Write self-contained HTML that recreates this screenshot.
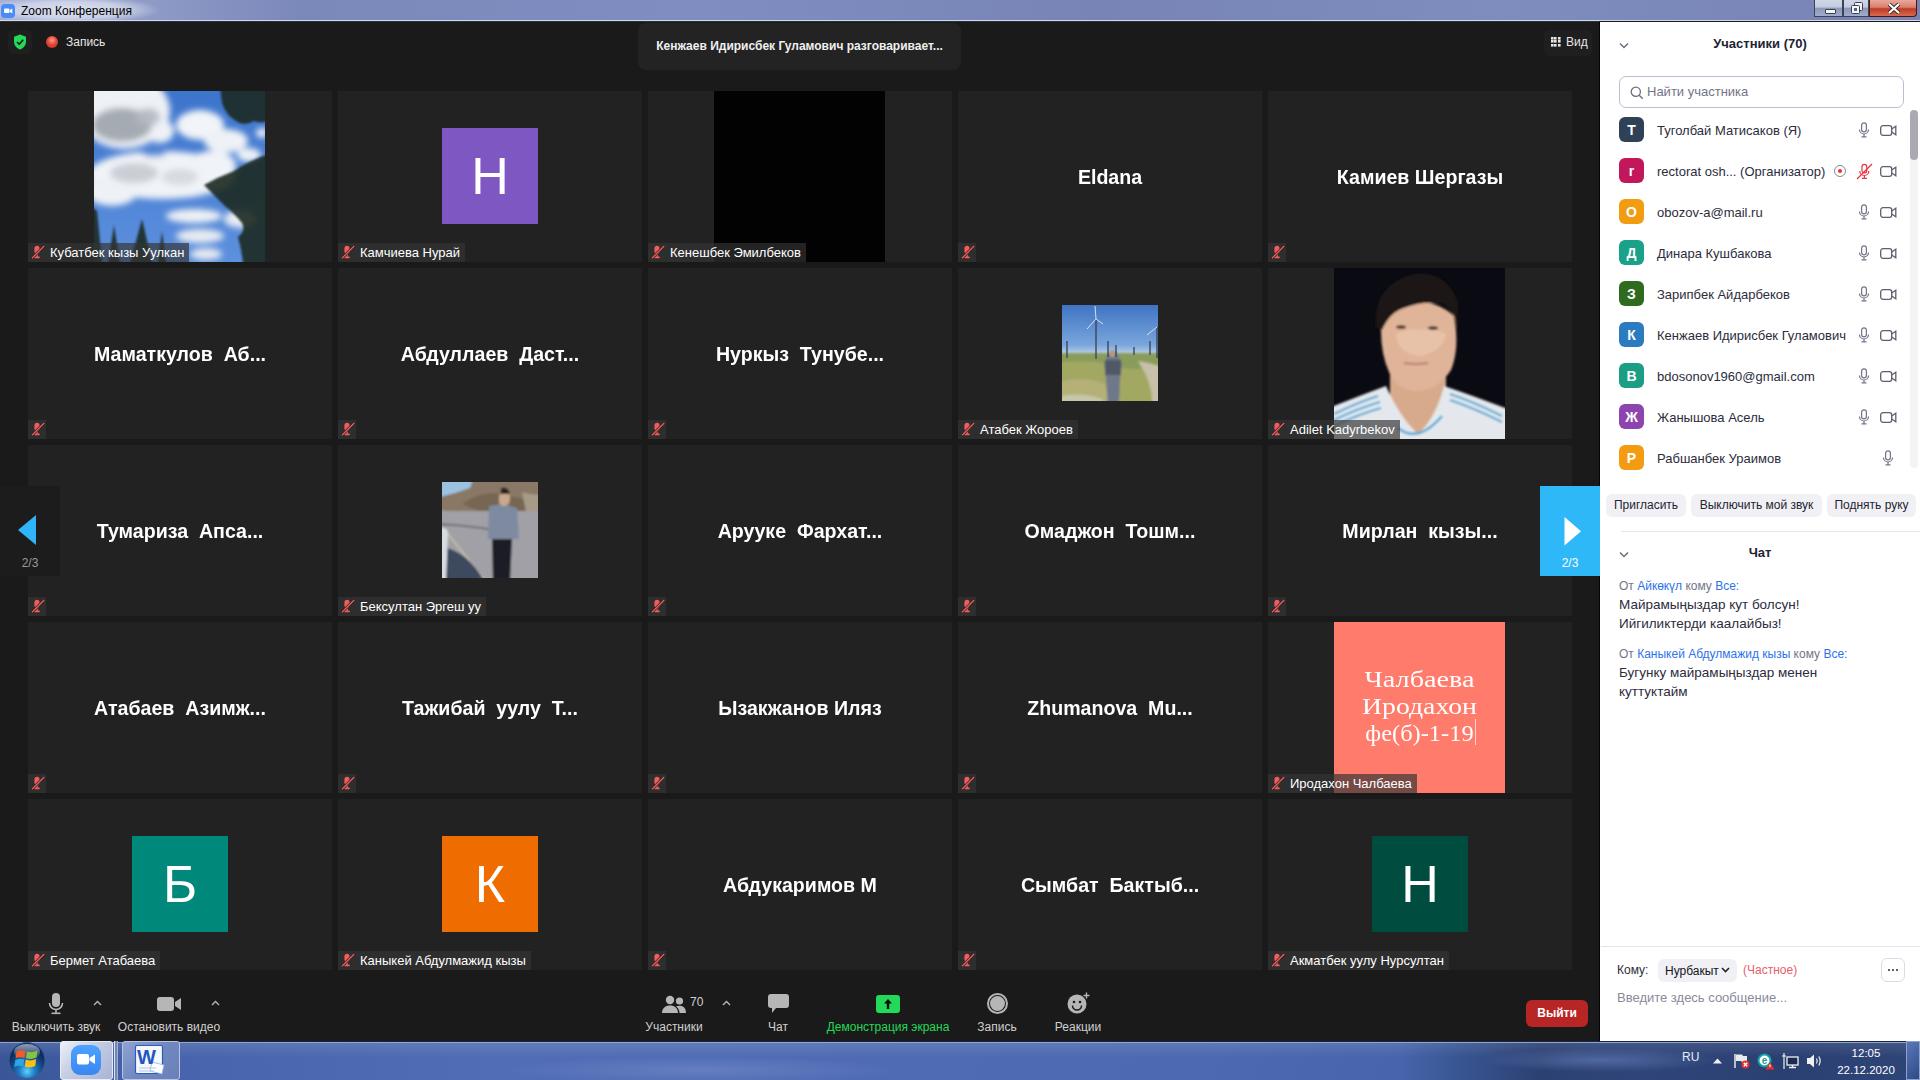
<!DOCTYPE html>
<html><head><meta charset="utf-8">
<style>
*{margin:0;padding:0;box-sizing:border-box}
html,body{width:1920px;height:1080px;overflow:hidden;background:#1a1a1a;font-family:"Liberation Sans",sans-serif}
.abs{position:absolute}
#title{left:0;top:0;width:1920px;height:21px;background:radial-gradient(ellipse 90px 14px at 70px 10px,rgba(225,228,242,.95) 0,rgba(210,215,235,.85) 60%,rgba(190,198,225,0) 100%),linear-gradient(90deg,#a6b0d2 0,#8d99c6 160px,#7b88ba 300px,#7f8dc0 700px,#7884b6 1100px,#7e8cbe 1500px,#7783b4 100%);border-bottom:1px solid #d0d8ea}
#title .t{left:21px;top:4px;font-size:12px;color:#000}
#title .zi{left:1px;top:4px}
.wb{position:absolute;top:0;height:17px;border:1px solid #3b4356;border-top:none;background:linear-gradient(180deg,#d0d6e6 0,#c3cbe0 45%,#8b97b8 50%,#a0acc8 100%)}
.wc{background:linear-gradient(180deg,#e8a89c 0,#d9806f 45%,#bf3b25 55%,#d66a50 100%);border-color:#4a1810;border-radius:0 0 4px 0}
#main{left:0;top:21px;width:1599px;height:1020px;background:#1a1a1a;border-top:1px solid #2a2f3d}
#panel{left:1600px;top:22px;width:320px;height:1019px;background:#fff}
#divider{left:1599px;top:22px;width:1px;height:1019px;background:#060606}
.tile{position:absolute;width:304px;height:171px;background:#222;overflow:hidden}
.ph{position:absolute}
.nm{position:absolute;left:0;top:1px;width:304px;height:171px;display:flex;align-items:center;justify-content:center;color:#fff;font-weight:bold;font-size:19.6px;white-space:pre;transform:scaleY(1.06)}
.lbl{position:absolute;left:0;bottom:0;height:19px;background:rgba(52,52,52,.68);color:#fff;font-size:13px;line-height:19px;padding-left:22px;padding-right:5px;white-space:nowrap}
.lbl.ic{width:18px;padding:0}
.lbl svg{position:absolute;left:3px;top:2px}
.av{position:absolute;width:96px;height:96px;left:104px;top:37px;color:#fff;font-size:52px;display:flex;align-items:center;justify-content:center}
#taskbar{left:0;top:1041px;width:1920px;height:39px;background:linear-gradient(180deg,rgba(255,255,255,.10) 0,rgba(255,255,255,0) 40%),radial-gradient(ellipse 120px 12px at 1600px 18px,rgba(120,150,210,.45),rgba(120,150,210,0)),radial-gradient(ellipse 200px 14px at 700px 28px,rgba(140,160,215,.35),rgba(140,160,215,0)),linear-gradient(90deg,#3a5699 0,#4864ac 180px,#516db5 500px,#4f6bb3 900px,#4d69b1 1200px,#4864ab 1400px,#3a5796 1450px,#2c4172 1540px,#2f457a 1640px,#2b4072 1780px,#2e4577 100%);border-top:1px solid #1a2440;box-shadow:inset 0 1px 0 #90a4d0}
.pt{position:absolute;left:1619px;width:290px;height:26px}
.pt .a{position:absolute;left:0;top:0;width:25px;height:25px;border-radius:6px;color:#fff;font-size:14px;font-weight:bold;display:flex;align-items:center;justify-content:center}
.pt .n{position:absolute;left:38px;top:6px;font-size:13px;color:#2c2c3c;white-space:nowrap}
.tb{position:absolute;color:#d0d0d0;font-size:12px;white-space:nowrap;text-align:center}
.chat{left:1619px;white-space:nowrap}
.sl{position:absolute;left:0;width:171px;text-align:center;font-family:'Liberation Serif',serif;font-size:23.5px;line-height:27px;color:#fff;white-space:nowrap}

</style></head><body>
<div id="title" class="abs"><div class="zi abs"><svg width="14" height="14" viewBox="0 0 14 14"><rect x="0" y="0" width="14" height="14" rx="4" fill="#4a8cf7"/><rect x="3" y="4.5" width="5.5" height="4.5" rx="1" fill="#fff"/><path d="M9 6l2.3-1.5v5L9 8z" fill="#fff"/></svg></div><div class="t abs">Zoom Конференция</div><div class="wb abs" style="left:1814px;width:29px"><div style="position:absolute;left:10px;top:9px;width:11px;height:5px;background:#f4f4f4;border:1px solid #3a4050;border-radius:1px"></div></div><div class="wb abs" style="left:1843px;width:26px"><svg style="position:absolute;left:6px;top:1px" width="14" height="14" viewBox="0 0 14 14"><rect x="4.5" y="1.5" width="8" height="8" rx="1" fill="#eef0f4" stroke="#3a4050" stroke-width="1"/><rect x="1.5" y="4.5" width="8" height="8" rx="1" fill="#f4f5f8" stroke="#3a4050" stroke-width="1"/><rect x="4" y="7" width="3" height="3" fill="#5a6478"/></svg></div><div class="wb wc abs" style="left:1869px;width:48px"><svg style="position:absolute;left:17px;top:3px" width="14" height="11" viewBox="0 0 14 11"><path d="M2 1L12 10M12 1L2 10" stroke="#3a2a2a" stroke-width="4"/><path d="M2 1L12 10M12 1L2 10" stroke="#fff" stroke-width="2.2"/></svg></div></div>
<div id="main" class="abs"></div>
<div class="abs" style="left:8px;top:30px;width:24px;height:24px;border-radius:5px;background:#1f1f1f"></div>
<svg class="abs" style="left:13px;top:34px" width="14" height="16" viewBox="0 0 14 16"><path d="M7 0.5L13 2.8V7.5C13 11.5 10.3 14.2 7 15.5C3.7 14.2 1 11.5 1 7.5V2.8z" fill="#23d959"/><path d="M4 8l2.2 2.2L10.2 5.8" stroke="#111" stroke-width="1.6" fill="none"/></svg>
<div class="abs" style="left:46px;top:36px;width:12px;height:12px;border-radius:50%;background:radial-gradient(circle at 50% 35%,#ff9a8a 0,#e6463a 45%,#b82a22 100%)"></div>
<div class="abs" style="left:66px;top:35px;font-size:12px;color:#e6e6e6">Запись</div>
<div class="abs" style="left:638px;top:23px;width:323px;height:47px;background:#232323;border-radius:8px"></div>
<div class="abs" style="left:638px;top:39px;width:323px;text-align:center;font-size:12px;font-weight:bold;color:#f0f0f0">Кенжаев Идирисбек Гуламович разговаривает...</div>
<div class="abs" style="left:1544px;top:30px;width:48px;height:26px;border-radius:6px;background:#1f1f1f"></div>
<svg class="abs" style="left:1551px;top:37px" width="10" height="10" viewBox="0 0 10 10"><rect x="0" y="0" width="2.6" height="2.6" fill="#e6e6e6"/><rect x="0" y="3" width="2.6" height="2.6" fill="#e6e6e6"/><rect x="0" y="7" width="2.6" height="2.6" fill="#e6e6e6"/><rect x="3" y="0" width="2.6" height="2.6" fill="#e6e6e6"/><rect x="3" y="3" width="2.6" height="2.6" fill="#e6e6e6"/><rect x="3" y="7" width="2.6" height="2.6" fill="#e6e6e6"/><rect x="7" y="0" width="2.6" height="2.6" fill="#e6e6e6"/><rect x="7" y="3" width="2.6" height="2.6" fill="#e6e6e6"/><rect x="7" y="7" width="2.6" height="2.6" fill="#e6e6e6"/></svg>
<div class="abs" style="left:1566px;top:35px;font-size:12px;color:#e6e6e6">Вид</div>
<div class="tile" style="left:28px;top:91px"><svg class="ph" style="left:66px;top:0" width="171" height="171" viewBox="0 0 171 171"><defs><linearGradient id="sk" x1="0" y1="0" x2="0" y2="1"><stop offset="0" stop-color="#3d74cc"/><stop offset="1" stop-color="#5d90de"/></linearGradient><filter id="bl" x="-10%" y="-10%" width="120%" height="120%"><feGaussianBlur stdDeviation="3.2"/></filter><filter id="bl2" x="-10%" y="-10%" width="120%" height="120%"><feGaussianBlur stdDeviation="0.9"/></filter></defs><rect width="171" height="171" fill="url(#sk)"/><g filter="url(#bl)"><ellipse cx="30.0" cy="20.0" rx="46.0" ry="38.0" fill="#eef1f6" opacity="1.00"/><ellipse cx="66.0" cy="40.0" rx="14.0" ry="12.0" fill="#eef1f6" opacity="1.00"/><ellipse cx="28.0" cy="34.0" rx="30.0" ry="17.0" fill="#a0a6af" opacity="0.95"/><ellipse cx="54.0" cy="26.0" rx="12.0" ry="9.0" fill="#b4b9c1" opacity="0.90"/><ellipse cx="106.0" cy="34.0" rx="24.0" ry="15.0" fill="#f1f4f8" opacity="1.00"/><ellipse cx="132.0" cy="50.0" rx="22.0" ry="12.0" fill="#eef2f6" opacity="1.00"/><ellipse cx="155.0" cy="64.0" rx="12.0" ry="7.0" fill="#eef2f6" opacity="1.00"/><ellipse cx="168.0" cy="42.0" rx="6.0" ry="5.0" fill="#eef2f6" opacity="1.00"/><ellipse cx="68.0" cy="84.0" rx="74.0" ry="24.0" fill="#f0f3f7" opacity="1.00"/><ellipse cx="18.0" cy="100.0" rx="26.0" ry="15.0" fill="#eef1f5" opacity="1.00"/><ellipse cx="118.0" cy="74.0" rx="24.0" ry="14.0" fill="#f0f3f7" opacity="1.00"/><ellipse cx="40.0" cy="82.0" rx="24.0" ry="10.0" fill="#c3c8d0" opacity="0.85"/><ellipse cx="86.0" cy="86.0" rx="18.0" ry="8.0" fill="#d0d5dc" opacity="0.80"/><ellipse cx="60.0" cy="62.0" rx="12.0" ry="4.0" fill="#4a80d4" opacity="0.85"/><ellipse cx="100.0" cy="125.0" rx="28.0" ry="7.0" fill="#eef1f6" opacity="1.00"/><ellipse cx="106.0" cy="145.0" rx="24.0" ry="7.0" fill="#e8ecf2" opacity="1.00"/><ellipse cx="112.0" cy="163.0" rx="16.0" ry="6.0" fill="#e6eaf0" opacity="1.00"/><ellipse cx="146.0" cy="128.0" rx="16.0" ry="9.0" fill="#e8ecf2" opacity="1.00"/></g><g filter="url(#bl2)" fill="#1c2c22" opacity="0.9"><path d="M126 -5H180V26Q170 34 160 30Q150 36 142 30Q132 24 128 12z"/><path d="M110 94Q124 86 140 80Q152 72 162 68Q170 64 180 62V180H150Q148 160 144 146Q152 140 148 132Q140 122 132 116Q122 106 110 94z"/><path d="M-5 114L3 120L9 180H-5z M13 180L20 134L27 180z M34 180L48 128L60 180z M63 180L68 140L73 180z"/></g></svg><div class="lbl"><svg width="14" height="14" viewBox="0 0 14 14"><path d="M6 0.8C7.7 0.8 8.6 2 8.6 3.6V6.2C8.6 7.8 7.7 9 6 9C4.3 9 3.4 7.8 3.4 6.2V3.6C3.4 2 4.3 0.8 6 0.8z" fill="#f25c5c"/><path d="M5.2 9V12H6.8V9z" fill="#f25c5c"/><rect x="3.2" y="11.6" width="5.6" height="1.6" rx="0.8" fill="#f25c5c"/><path d="M1 13.2L13.2 1" stroke="#202020" stroke-width="2.6"/><path d="M1 13.2L13.2 1" stroke="#f25c5c" stroke-width="1.3"/></svg>Кубатбек кызы Уулкан</div></div>
<div class="tile" style="left:338px;top:91px"><div class="av" style="background:#7f57c2">Н</div><div class="lbl"><svg width="14" height="14" viewBox="0 0 14 14"><path d="M6 0.8C7.7 0.8 8.6 2 8.6 3.6V6.2C8.6 7.8 7.7 9 6 9C4.3 9 3.4 7.8 3.4 6.2V3.6C3.4 2 4.3 0.8 6 0.8z" fill="#f25c5c"/><path d="M5.2 9V12H6.8V9z" fill="#f25c5c"/><rect x="3.2" y="11.6" width="5.6" height="1.6" rx="0.8" fill="#f25c5c"/><path d="M1 13.2L13.2 1" stroke="#202020" stroke-width="2.6"/><path d="M1 13.2L13.2 1" stroke="#f25c5c" stroke-width="1.3"/></svg>Камчиева Нурай</div></div>
<div class="tile" style="left:648px;top:91px"><div class="ph" style="left:66px;top:0;width:171px;height:171px;background:#020202"></div><div class="lbl"><svg width="14" height="14" viewBox="0 0 14 14"><path d="M6 0.8C7.7 0.8 8.6 2 8.6 3.6V6.2C8.6 7.8 7.7 9 6 9C4.3 9 3.4 7.8 3.4 6.2V3.6C3.4 2 4.3 0.8 6 0.8z" fill="#f25c5c"/><path d="M5.2 9V12H6.8V9z" fill="#f25c5c"/><rect x="3.2" y="11.6" width="5.6" height="1.6" rx="0.8" fill="#f25c5c"/><path d="M1 13.2L13.2 1" stroke="#202020" stroke-width="2.6"/><path d="M1 13.2L13.2 1" stroke="#f25c5c" stroke-width="1.3"/></svg>Кенешбек Эмилбеков</div></div>
<div class="tile" style="left:958px;top:91px"><div class="nm">Eldana</div><div class="lbl ic"><svg width="14" height="14" viewBox="0 0 14 14"><path d="M6 0.8C7.7 0.8 8.6 2 8.6 3.6V6.2C8.6 7.8 7.7 9 6 9C4.3 9 3.4 7.8 3.4 6.2V3.6C3.4 2 4.3 0.8 6 0.8z" fill="#f25c5c"/><path d="M5.2 9V12H6.8V9z" fill="#f25c5c"/><rect x="3.2" y="11.6" width="5.6" height="1.6" rx="0.8" fill="#f25c5c"/><path d="M1 13.2L13.2 1" stroke="#202020" stroke-width="2.6"/><path d="M1 13.2L13.2 1" stroke="#f25c5c" stroke-width="1.3"/></svg></div></div>
<div class="tile" style="left:1268px;top:91px"><div class="nm">Камиев Шергазы</div><div class="lbl ic"><svg width="14" height="14" viewBox="0 0 14 14"><path d="M6 0.8C7.7 0.8 8.6 2 8.6 3.6V6.2C8.6 7.8 7.7 9 6 9C4.3 9 3.4 7.8 3.4 6.2V3.6C3.4 2 4.3 0.8 6 0.8z" fill="#f25c5c"/><path d="M5.2 9V12H6.8V9z" fill="#f25c5c"/><rect x="3.2" y="11.6" width="5.6" height="1.6" rx="0.8" fill="#f25c5c"/><path d="M1 13.2L13.2 1" stroke="#202020" stroke-width="2.6"/><path d="M1 13.2L13.2 1" stroke="#f25c5c" stroke-width="1.3"/></svg></div></div>
<div class="tile" style="left:28px;top:268px"><div class="nm">Маматкулов  Аб...</div><div class="lbl ic"><svg width="14" height="14" viewBox="0 0 14 14"><path d="M6 0.8C7.7 0.8 8.6 2 8.6 3.6V6.2C8.6 7.8 7.7 9 6 9C4.3 9 3.4 7.8 3.4 6.2V3.6C3.4 2 4.3 0.8 6 0.8z" fill="#f25c5c"/><path d="M5.2 9V12H6.8V9z" fill="#f25c5c"/><rect x="3.2" y="11.6" width="5.6" height="1.6" rx="0.8" fill="#f25c5c"/><path d="M1 13.2L13.2 1" stroke="#202020" stroke-width="2.6"/><path d="M1 13.2L13.2 1" stroke="#f25c5c" stroke-width="1.3"/></svg></div></div>
<div class="tile" style="left:338px;top:268px"><div class="nm">Абдуллаев  Даст...</div><div class="lbl ic"><svg width="14" height="14" viewBox="0 0 14 14"><path d="M6 0.8C7.7 0.8 8.6 2 8.6 3.6V6.2C8.6 7.8 7.7 9 6 9C4.3 9 3.4 7.8 3.4 6.2V3.6C3.4 2 4.3 0.8 6 0.8z" fill="#f25c5c"/><path d="M5.2 9V12H6.8V9z" fill="#f25c5c"/><rect x="3.2" y="11.6" width="5.6" height="1.6" rx="0.8" fill="#f25c5c"/><path d="M1 13.2L13.2 1" stroke="#202020" stroke-width="2.6"/><path d="M1 13.2L13.2 1" stroke="#f25c5c" stroke-width="1.3"/></svg></div></div>
<div class="tile" style="left:648px;top:268px"><div class="nm">Нуркыз  Тунубе...</div><div class="lbl ic"><svg width="14" height="14" viewBox="0 0 14 14"><path d="M6 0.8C7.7 0.8 8.6 2 8.6 3.6V6.2C8.6 7.8 7.7 9 6 9C4.3 9 3.4 7.8 3.4 6.2V3.6C3.4 2 4.3 0.8 6 0.8z" fill="#f25c5c"/><path d="M5.2 9V12H6.8V9z" fill="#f25c5c"/><rect x="3.2" y="11.6" width="5.6" height="1.6" rx="0.8" fill="#f25c5c"/><path d="M1 13.2L13.2 1" stroke="#202020" stroke-width="2.6"/><path d="M1 13.2L13.2 1" stroke="#f25c5c" stroke-width="1.3"/></svg></div></div>
<div class="tile" style="left:958px;top:268px"><svg class="ph" style="left:104px;top:37px" width="96" height="96" viewBox="0 0 96 96"><defs><linearGradient id="ws" x1="0" y1="0" x2="0" y2="1"><stop offset="0" stop-color="#3f74c4"/><stop offset="0.8" stop-color="#7aa6dc"/><stop offset="1" stop-color="#c4d6ea"/></linearGradient><filter id="wb" x="-10%" y="-10%" width="120%" height="120%"><feGaussianBlur stdDeviation="1.1"/></filter></defs><rect width="96" height="96" fill="#98a468"/><rect width="96" height="50" fill="url(#ws)"/><g filter="url(#wb)"><rect x="-6" y="48" width="108" height="54" fill="#8a9c5c"/><path d="M-6 58Q30 54 50 60Q70 68 102 60V102H-6z" fill="#a2a862"/><path d="M-6 78Q20 70 40 78Q55 84 62 102H-6z" fill="#b4b078"/><path d="M-6 92Q20 86 40 94L44 102H-6z" fill="#c6c6a8"/><path d="M76 56Q88 58 102 62V102H90Q92 80 76 56z" fill="#c8c0a8"/><path d="M48 46Q54 44 56 50L60 58L58 74L57 102H46L44 74L42 58z" fill="#6e7888"/><path d="M43 55H59V70H43z" fill="#505866"/><circle cx="50.5" cy="49" r="3" fill="#c09880"/></g><g stroke="#384050" stroke-width="1.3"><path d="M34 14V54M5 36V53M95 22V53M88 36V50M46 36V52M54 40V52M72 42V50"/></g><g stroke="#e4e9f0" stroke-width="0.9"><path d="M34 14L25 24M34 14L41 19M34 14L33 1M95 22L85 30"/></g></svg><div class="lbl"><svg width="14" height="14" viewBox="0 0 14 14"><path d="M6 0.8C7.7 0.8 8.6 2 8.6 3.6V6.2C8.6 7.8 7.7 9 6 9C4.3 9 3.4 7.8 3.4 6.2V3.6C3.4 2 4.3 0.8 6 0.8z" fill="#f25c5c"/><path d="M5.2 9V12H6.8V9z" fill="#f25c5c"/><rect x="3.2" y="11.6" width="5.6" height="1.6" rx="0.8" fill="#f25c5c"/><path d="M1 13.2L13.2 1" stroke="#202020" stroke-width="2.6"/><path d="M1 13.2L13.2 1" stroke="#f25c5c" stroke-width="1.3"/></svg>Атабек Жороев</div></div>
<div class="tile" style="left:1268px;top:268px"><svg class="ph" style="left:66px;top:0" width="171" height="171" viewBox="0 0 171 171"><defs><filter id="fb" x="-10%" y="-10%" width="120%" height="120%"><feGaussianBlur stdDeviation="1.2"/></filter></defs><rect width="171" height="171" fill="#0a0b12"/><g filter="url(#fb)"><path d="M56 104Q84 124 112 104V171H56z" fill="#d8aa8c"/><path d="M47 62Q46 36 70 34Q100 30 120 48Q126 80 117 102Q104 122 83 123Q62 122 55 104Q47 86 47 62z" fill="#e0b498"/><path d="M42 60Q38 16 80 6Q112 2 124 34L124 62Q122 44 110 36Q90 32 70 40Q56 44 48 62z" fill="#1c1512"/><path d="M62 66Q75 60 86 62Q100 60 112 66Q108 84 86 88Q64 86 62 66z" fill="#e8c2a8"/><path d="M-5 140Q25 128 52 118Q66 150 84 166Q102 150 110 118Q140 128 176 142V176H-5z" fill="#e4e8ec"/><path d="M0 146Q25 134 44 128M0 152Q25 140 46 134M0 158Q25 146 47 140M116 126Q140 134 168 148M116 132Q140 140 168 154" stroke="#4aa6d6" stroke-width="2" fill="none"/><path d="M64 160Q84 176 108 148" stroke="#4aa6d6" stroke-width="2.4" fill="none"/><ellipse cx="67" cy="59" rx="5" ry="1.8" fill="#4a3026"/><ellipse cx="99" cy="60" rx="5" ry="1.8" fill="#4a3026"/><path d="M70 95Q82 97 94 95" stroke="#b88068" stroke-width="2" fill="none"/></g></svg><div class="lbl"><svg width="14" height="14" viewBox="0 0 14 14"><path d="M6 0.8C7.7 0.8 8.6 2 8.6 3.6V6.2C8.6 7.8 7.7 9 6 9C4.3 9 3.4 7.8 3.4 6.2V3.6C3.4 2 4.3 0.8 6 0.8z" fill="#f25c5c"/><path d="M5.2 9V12H6.8V9z" fill="#f25c5c"/><rect x="3.2" y="11.6" width="5.6" height="1.6" rx="0.8" fill="#f25c5c"/><path d="M1 13.2L13.2 1" stroke="#202020" stroke-width="2.6"/><path d="M1 13.2L13.2 1" stroke="#f25c5c" stroke-width="1.3"/></svg>Adilet Kadyrbekov</div></div>
<div class="tile" style="left:28px;top:445px"><div class="nm">Тумариза  Апса...</div><div class="lbl ic"><svg width="14" height="14" viewBox="0 0 14 14"><path d="M6 0.8C7.7 0.8 8.6 2 8.6 3.6V6.2C8.6 7.8 7.7 9 6 9C4.3 9 3.4 7.8 3.4 6.2V3.6C3.4 2 4.3 0.8 6 0.8z" fill="#f25c5c"/><path d="M5.2 9V12H6.8V9z" fill="#f25c5c"/><rect x="3.2" y="11.6" width="5.6" height="1.6" rx="0.8" fill="#f25c5c"/><path d="M1 13.2L13.2 1" stroke="#202020" stroke-width="2.6"/><path d="M1 13.2L13.2 1" stroke="#f25c5c" stroke-width="1.3"/></svg></div></div>
<div class="tile" style="left:338px;top:445px"><svg class="ph" style="left:104px;top:37px" width="96" height="96" viewBox="0 0 96 96"><defs><filter id="rb" x="-10%" y="-10%" width="120%" height="120%"><feGaussianBlur stdDeviation="1.1"/></filter></defs><rect width="96" height="96" fill="#a0a0a6"/><g filter="url(#rb)"><rect x="-6" y="-6" width="108" height="40" fill="#9cc2e2"/><path d="M-6 16Q12 12 28 6Q30 -2 34 -6H102V36Q70 32 40 30Q10 30 -6 28z" fill="#8a7866"/><path d="M20 22Q40 8 62 12Q80 18 102 20V38Q70 32 40 30z" fill="#766652"/><path d="M80 10Q92 14 102 12V34L84 30z" fill="#a89a88"/><rect x="-6" y="29" width="108" height="73" fill="#a0a0a6"/><path d="M-6 42Q30 44 50 48" stroke="#72727a" stroke-width="2" fill="none"/><path d="M6 52L46 102" stroke="#cac2aa" stroke-width="1.5" fill="none"/><path d="M-6 64Q25 66 44 102H-6z" fill="#3e4a5e"/><path d="M-6 45Q6 45 6 50L4 102H-6z" fill="#d8dce2"/><path d="M47 24Q60 20 75 26L77 57H46z" fill="#7e8aa0"/><path d="M58 8Q68 6 68 16Q68 24 62 24Q56 24 57 16z" fill="#c8a88e"/><path d="M59 6Q66 4 68 12L58 12z" fill="#2a2420"/><path d="M50 57H70L68 102H51z" fill="#1e1f26"/></g></svg><div class="lbl"><svg width="14" height="14" viewBox="0 0 14 14"><path d="M6 0.8C7.7 0.8 8.6 2 8.6 3.6V6.2C8.6 7.8 7.7 9 6 9C4.3 9 3.4 7.8 3.4 6.2V3.6C3.4 2 4.3 0.8 6 0.8z" fill="#f25c5c"/><path d="M5.2 9V12H6.8V9z" fill="#f25c5c"/><rect x="3.2" y="11.6" width="5.6" height="1.6" rx="0.8" fill="#f25c5c"/><path d="M1 13.2L13.2 1" stroke="#202020" stroke-width="2.6"/><path d="M1 13.2L13.2 1" stroke="#f25c5c" stroke-width="1.3"/></svg>Бексултан Эргеш уу</div></div>
<div class="tile" style="left:648px;top:445px"><div class="nm">Арууке  Фархат...</div><div class="lbl ic"><svg width="14" height="14" viewBox="0 0 14 14"><path d="M6 0.8C7.7 0.8 8.6 2 8.6 3.6V6.2C8.6 7.8 7.7 9 6 9C4.3 9 3.4 7.8 3.4 6.2V3.6C3.4 2 4.3 0.8 6 0.8z" fill="#f25c5c"/><path d="M5.2 9V12H6.8V9z" fill="#f25c5c"/><rect x="3.2" y="11.6" width="5.6" height="1.6" rx="0.8" fill="#f25c5c"/><path d="M1 13.2L13.2 1" stroke="#202020" stroke-width="2.6"/><path d="M1 13.2L13.2 1" stroke="#f25c5c" stroke-width="1.3"/></svg></div></div>
<div class="tile" style="left:958px;top:445px"><div class="nm">Омаджон  Тошм...</div><div class="lbl ic"><svg width="14" height="14" viewBox="0 0 14 14"><path d="M6 0.8C7.7 0.8 8.6 2 8.6 3.6V6.2C8.6 7.8 7.7 9 6 9C4.3 9 3.4 7.8 3.4 6.2V3.6C3.4 2 4.3 0.8 6 0.8z" fill="#f25c5c"/><path d="M5.2 9V12H6.8V9z" fill="#f25c5c"/><rect x="3.2" y="11.6" width="5.6" height="1.6" rx="0.8" fill="#f25c5c"/><path d="M1 13.2L13.2 1" stroke="#202020" stroke-width="2.6"/><path d="M1 13.2L13.2 1" stroke="#f25c5c" stroke-width="1.3"/></svg></div></div>
<div class="tile" style="left:1268px;top:445px"><div class="nm">Мирлан  кызы...</div><div class="lbl ic"><svg width="14" height="14" viewBox="0 0 14 14"><path d="M6 0.8C7.7 0.8 8.6 2 8.6 3.6V6.2C8.6 7.8 7.7 9 6 9C4.3 9 3.4 7.8 3.4 6.2V3.6C3.4 2 4.3 0.8 6 0.8z" fill="#f25c5c"/><path d="M5.2 9V12H6.8V9z" fill="#f25c5c"/><rect x="3.2" y="11.6" width="5.6" height="1.6" rx="0.8" fill="#f25c5c"/><path d="M1 13.2L13.2 1" stroke="#202020" stroke-width="2.6"/><path d="M1 13.2L13.2 1" stroke="#f25c5c" stroke-width="1.3"/></svg></div></div>
<div class="tile" style="left:28px;top:622px"><div class="nm">Атабаев  Азимж...</div><div class="lbl ic"><svg width="14" height="14" viewBox="0 0 14 14"><path d="M6 0.8C7.7 0.8 8.6 2 8.6 3.6V6.2C8.6 7.8 7.7 9 6 9C4.3 9 3.4 7.8 3.4 6.2V3.6C3.4 2 4.3 0.8 6 0.8z" fill="#f25c5c"/><path d="M5.2 9V12H6.8V9z" fill="#f25c5c"/><rect x="3.2" y="11.6" width="5.6" height="1.6" rx="0.8" fill="#f25c5c"/><path d="M1 13.2L13.2 1" stroke="#202020" stroke-width="2.6"/><path d="M1 13.2L13.2 1" stroke="#f25c5c" stroke-width="1.3"/></svg></div></div>
<div class="tile" style="left:338px;top:622px"><div class="nm">Тажибай  уулу  Т...</div><div class="lbl ic"><svg width="14" height="14" viewBox="0 0 14 14"><path d="M6 0.8C7.7 0.8 8.6 2 8.6 3.6V6.2C8.6 7.8 7.7 9 6 9C4.3 9 3.4 7.8 3.4 6.2V3.6C3.4 2 4.3 0.8 6 0.8z" fill="#f25c5c"/><path d="M5.2 9V12H6.8V9z" fill="#f25c5c"/><rect x="3.2" y="11.6" width="5.6" height="1.6" rx="0.8" fill="#f25c5c"/><path d="M1 13.2L13.2 1" stroke="#202020" stroke-width="2.6"/><path d="M1 13.2L13.2 1" stroke="#f25c5c" stroke-width="1.3"/></svg></div></div>
<div class="tile" style="left:648px;top:622px"><div class="nm">Ызакжанов Иляз</div><div class="lbl ic"><svg width="14" height="14" viewBox="0 0 14 14"><path d="M6 0.8C7.7 0.8 8.6 2 8.6 3.6V6.2C8.6 7.8 7.7 9 6 9C4.3 9 3.4 7.8 3.4 6.2V3.6C3.4 2 4.3 0.8 6 0.8z" fill="#f25c5c"/><path d="M5.2 9V12H6.8V9z" fill="#f25c5c"/><rect x="3.2" y="11.6" width="5.6" height="1.6" rx="0.8" fill="#f25c5c"/><path d="M1 13.2L13.2 1" stroke="#202020" stroke-width="2.6"/><path d="M1 13.2L13.2 1" stroke="#f25c5c" stroke-width="1.3"/></svg></div></div>
<div class="tile" style="left:958px;top:622px"><div class="nm">Zhumanova  Mu...</div><div class="lbl ic"><svg width="14" height="14" viewBox="0 0 14 14"><path d="M6 0.8C7.7 0.8 8.6 2 8.6 3.6V6.2C8.6 7.8 7.7 9 6 9C4.3 9 3.4 7.8 3.4 6.2V3.6C3.4 2 4.3 0.8 6 0.8z" fill="#f25c5c"/><path d="M5.2 9V12H6.8V9z" fill="#f25c5c"/><rect x="3.2" y="11.6" width="5.6" height="1.6" rx="0.8" fill="#f25c5c"/><path d="M1 13.2L13.2 1" stroke="#202020" stroke-width="2.6"/><path d="M1 13.2L13.2 1" stroke="#f25c5c" stroke-width="1.3"/></svg></div></div>
<div class="tile" style="left:1268px;top:622px"><div class="ph" style="left:66px;top:0;width:171px;height:171px;background:#ff7b6b"><div class="sl" style="top:44px;transform:scaleX(1.2)">Чалбаева</div><div class="sl" style="top:71px;transform:scaleX(1.18)">Иродахон</div><div class="sl" style="top:98px;transform:scaleX(1.04)">фе(б)-1-19</div><div style="position:absolute;left:141px;top:97px;width:1px;height:26px;background:#f6d6ce"></div></div><div class="lbl"><svg width="14" height="14" viewBox="0 0 14 14"><path d="M6 0.8C7.7 0.8 8.6 2 8.6 3.6V6.2C8.6 7.8 7.7 9 6 9C4.3 9 3.4 7.8 3.4 6.2V3.6C3.4 2 4.3 0.8 6 0.8z" fill="#f25c5c"/><path d="M5.2 9V12H6.8V9z" fill="#f25c5c"/><rect x="3.2" y="11.6" width="5.6" height="1.6" rx="0.8" fill="#f25c5c"/><path d="M1 13.2L13.2 1" stroke="#202020" stroke-width="2.6"/><path d="M1 13.2L13.2 1" stroke="#f25c5c" stroke-width="1.3"/></svg>Иродахон Чалбаева</div></div>
<div class="tile" style="left:28px;top:799px"><div class="av" style="background:#00897b">Б</div><div class="lbl"><svg width="14" height="14" viewBox="0 0 14 14"><path d="M6 0.8C7.7 0.8 8.6 2 8.6 3.6V6.2C8.6 7.8 7.7 9 6 9C4.3 9 3.4 7.8 3.4 6.2V3.6C3.4 2 4.3 0.8 6 0.8z" fill="#f25c5c"/><path d="M5.2 9V12H6.8V9z" fill="#f25c5c"/><rect x="3.2" y="11.6" width="5.6" height="1.6" rx="0.8" fill="#f25c5c"/><path d="M1 13.2L13.2 1" stroke="#202020" stroke-width="2.6"/><path d="M1 13.2L13.2 1" stroke="#f25c5c" stroke-width="1.3"/></svg>Бермет Атабаева</div></div>
<div class="tile" style="left:338px;top:799px"><div class="av" style="background:#ef6c00">К</div><div class="lbl"><svg width="14" height="14" viewBox="0 0 14 14"><path d="M6 0.8C7.7 0.8 8.6 2 8.6 3.6V6.2C8.6 7.8 7.7 9 6 9C4.3 9 3.4 7.8 3.4 6.2V3.6C3.4 2 4.3 0.8 6 0.8z" fill="#f25c5c"/><path d="M5.2 9V12H6.8V9z" fill="#f25c5c"/><rect x="3.2" y="11.6" width="5.6" height="1.6" rx="0.8" fill="#f25c5c"/><path d="M1 13.2L13.2 1" stroke="#202020" stroke-width="2.6"/><path d="M1 13.2L13.2 1" stroke="#f25c5c" stroke-width="1.3"/></svg>Каныкей Абдулмажид кызы</div></div>
<div class="tile" style="left:648px;top:799px"><div class="nm">Абдукаримов М</div><div class="lbl ic"><svg width="14" height="14" viewBox="0 0 14 14"><path d="M6 0.8C7.7 0.8 8.6 2 8.6 3.6V6.2C8.6 7.8 7.7 9 6 9C4.3 9 3.4 7.8 3.4 6.2V3.6C3.4 2 4.3 0.8 6 0.8z" fill="#f25c5c"/><path d="M5.2 9V12H6.8V9z" fill="#f25c5c"/><rect x="3.2" y="11.6" width="5.6" height="1.6" rx="0.8" fill="#f25c5c"/><path d="M1 13.2L13.2 1" stroke="#202020" stroke-width="2.6"/><path d="M1 13.2L13.2 1" stroke="#f25c5c" stroke-width="1.3"/></svg></div></div>
<div class="tile" style="left:958px;top:799px"><div class="nm">Сымбат  Бактыб...</div><div class="lbl ic"><svg width="14" height="14" viewBox="0 0 14 14"><path d="M6 0.8C7.7 0.8 8.6 2 8.6 3.6V6.2C8.6 7.8 7.7 9 6 9C4.3 9 3.4 7.8 3.4 6.2V3.6C3.4 2 4.3 0.8 6 0.8z" fill="#f25c5c"/><path d="M5.2 9V12H6.8V9z" fill="#f25c5c"/><rect x="3.2" y="11.6" width="5.6" height="1.6" rx="0.8" fill="#f25c5c"/><path d="M1 13.2L13.2 1" stroke="#202020" stroke-width="2.6"/><path d="M1 13.2L13.2 1" stroke="#f25c5c" stroke-width="1.3"/></svg></div></div>
<div class="tile" style="left:1268px;top:799px"><div class="av" style="background:#004d40">Н</div><div class="lbl"><svg width="14" height="14" viewBox="0 0 14 14"><path d="M6 0.8C7.7 0.8 8.6 2 8.6 3.6V6.2C8.6 7.8 7.7 9 6 9C4.3 9 3.4 7.8 3.4 6.2V3.6C3.4 2 4.3 0.8 6 0.8z" fill="#f25c5c"/><path d="M5.2 9V12H6.8V9z" fill="#f25c5c"/><rect x="3.2" y="11.6" width="5.6" height="1.6" rx="0.8" fill="#f25c5c"/><path d="M1 13.2L13.2 1" stroke="#202020" stroke-width="2.6"/><path d="M1 13.2L13.2 1" stroke="#f25c5c" stroke-width="1.3"/></svg>Акматбек уулу Нурсултан</div></div>
<div id="divider" class="abs"></div>
<div class="abs" style="left:0;top:486px;width:60px;height:90px;background:#1c1c1c"></div>
<svg class="abs" style="left:18px;top:515px" width="20" height="30" viewBox="0 0 20 30"><path d="M18 0V30L0 15z" fill="#2fb4f7"/></svg>
<div class="abs" style="left:0;top:556px;width:60px;text-align:center;font-size:12px;color:#9a9a9a">2/3</div>
<div class="abs" style="left:1540px;top:486px;width:60px;height:90px;background:#2fb8f8"></div>
<svg class="abs" style="left:1564px;top:517px" width="20" height="30" viewBox="0 0 20 30"><path d="M0.5 0V28.5L17 14.25z" fill="#fff"/></svg>
<div class="abs" style="left:1540px;top:556px;width:60px;text-align:center;font-size:12px;color:#fff">2/3</div>
<svg class="abs" style="left:48px;top:993px" width="16" height="22" viewBox="0 0 16 22"><rect x="4" y="0" width="8" height="14" rx="4" fill="#b6b6b6"/><path d="M1.5 10a6.5 6.5 0 0 0 13 0" stroke="#b6b6b6" stroke-width="1.6" fill="none"/><rect x="7.2" y="16" width="1.6" height="4" fill="#b6b6b6"/><rect x="3.5" y="19.5" width="9" height="1.6" fill="#b6b6b6"/></svg>
<svg class="abs" style="left:93px;top:1000px" width="9" height="6" viewBox="0 0 9 6"><path d="M1 5L4.5 1.5L8 5" stroke="#b6b6b6" stroke-width="1.4" fill="none"/></svg>
<div class="tb" style="left:0;top:1020px;width:112px">Выключить звук</div>
<svg class="abs" style="left:157px;top:996px" width="25" height="16" viewBox="0 0 25 16"><rect x="0" y="1" width="17" height="14" rx="3" fill="#b6b6b6"/><path d="M18 6L24 2V14L18 10z" fill="#b6b6b6"/></svg>
<svg class="abs" style="left:211px;top:1000px" width="9" height="6" viewBox="0 0 9 6"><path d="M1 5L4.5 1.5L8 5" stroke="#b6b6b6" stroke-width="1.4" fill="none"/></svg>
<div class="tb" style="left:112px;top:1020px;width:114px">Остановить видео</div>
<svg class="abs" style="left:662px;top:995px" width="24" height="19" viewBox="0 0 24 19"><circle cx="8" cy="5" r="4.2" fill="#b6b6b6"/><path d="M0 18c0-5 3.5-7.5 8-7.5s8 2.5 8 7.5z" fill="#b6b6b6"/><circle cx="17.5" cy="6" r="3.6" fill="#b6b6b6"/><path d="M14 11.5c1-0.5 2.2-0.8 3.5-0.8 3.8 0 6.5 2.3 6.5 7.3h-6.5c0-2.8-1.2-5-3.5-6.5z" fill="#b6b6b6"/></svg>
<div class="tb" style="left:690px;top:995px;font-size:12px">70</div>
<svg class="abs" style="left:722px;top:1000px" width="9" height="6" viewBox="0 0 9 6"><path d="M1 5L4.5 1.5L8 5" stroke="#b6b6b6" stroke-width="1.4" fill="none"/></svg>
<div class="tb" style="left:624px;top:1020px;width:100px">Участники</div>
<svg class="abs" style="left:768px;top:994px" width="21" height="20" viewBox="0 0 21 20"><path d="M3 0H18A3 3 0 0 1 21 3V11A3 3 0 0 1 18 14H8L4 19V14H3A3 3 0 0 1 0 11V3A3 3 0 0 1 3 0z" fill="#b6b6b6"/></svg>
<div class="tb" style="left:748px;top:1020px;width:60px">Чат</div>
<div class="abs" style="left:876px;top:995px;width:24px;height:18px;border-radius:3px;background:#23d959"></div>
<svg class="abs" style="left:882px;top:998px" width="12" height="12" viewBox="0 0 12 12"><path d="M6 1L10 5.5H7.2V11H4.8V5.5H2z" fill="#0d0d0d"/></svg>
<div class="tb" style="left:818px;top:1020px;width:140px;color:#23d959">Демонстрация экрана</div>
<div class="abs" style="left:987px;top:993px;width:21px;height:21px;border-radius:50%;border:2px solid #b6b6b6"></div>
<div class="abs" style="left:990px;top:996px;width:15px;height:15px;border-radius:50%;background:#b6b6b6"></div>
<div class="tb" style="left:957px;top:1020px;width:80px">Запись</div>
<svg class="abs" style="left:1067px;top:992px" width="24" height="22" viewBox="0 0 24 22"><circle cx="10" cy="12" r="9.5" fill="#b6b6b6"/><circle cx="7" cy="10" r="1.3" fill="#1a1a1a"/><circle cx="13" cy="10" r="1.3" fill="#1a1a1a"/><path d="M5.5 13.5a4.5 4.5 0 0 0 9 0" stroke="#1a1a1a" stroke-width="1.5" fill="none"/><path d="M19.5 0V7M16 3.5H23" stroke="#1a1a1a" stroke-width="3.5"/><path d="M19.5 0.5V6.5M16.5 3.5H22.5" stroke="#b6b6b6" stroke-width="1.4"/></svg>
<div class="tb" style="left:1038px;top:1020px;width:80px">Реакции</div>
<div class="abs" style="left:1526px;top:1000px;width:62px;height:27px;border-radius:6px;background:#b82525;color:#fff;font-size:12px;font-weight:bold;text-align:center;line-height:26px">Выйти</div>
<div id="taskbar" class="abs"></div>
<svg class="abs" style="left:7px;top:1041px" width="40" height="39" viewBox="0 0 40 39"><defs><radialGradient id="og" cx="50%" cy="80%" r="60%"><stop offset="0" stop-color="#5fd4ff"/><stop offset="0.35" stop-color="#1f7fc8"/><stop offset="0.75" stop-color="#15427e"/><stop offset="1" stop-color="#0e2c5c"/></radialGradient><linearGradient id="oh" x1="0" y1="0" x2="0" y2="1"><stop offset="0" stop-color="#fff" stop-opacity=".55"/><stop offset="1" stop-color="#fff" stop-opacity="0"/></linearGradient></defs><circle cx="20" cy="19.5" r="18" fill="url(#og)" stroke="#3b5c94" stroke-width="1"/><ellipse cx="20" cy="11" rx="13" ry="8" fill="url(#oh)"/><path d="M9.5 10.5Q13 8.5 18.5 10L17.5 17Q12.5 15.5 8.5 17.5z" fill="#f25a2a"/><path d="M20 10.5Q25 12.5 30.5 9.5L29.5 16.5Q24 19 19 17z" fill="#84c441"/><path d="M8.3 19Q12.5 17 17.2 18.5L16.2 25.5Q11.5 24 7.3 26z" fill="#2ba6e4"/><path d="M18.8 18.5Q24 20.5 29.2 18L28.2 25Q23 27.5 17.8 25.5z" fill="#fcbf12"/></svg>
<div class="abs" style="left:60px;top:1041px;width:53px;height:39px;border:1px solid #e8ecf8;border-radius:3px;background:linear-gradient(135deg,#eef0f8 0,#c8cfe4 40%,#a8b4d4 100%)"></div>
<div class="abs" style="left:71px;top:1045px;width:30px;height:30px;border-radius:9px;background:linear-gradient(180deg,#4ea2ff,#3a86f2)"></div>
<svg class="abs" style="left:77px;top:1053px" width="19" height="13" viewBox="0 0 19 13"><rect x="0" y="1" width="12" height="10.5" rx="2" fill="#fff"/><path d="M12.5 5L18 1.5V11L12.5 7.5z" fill="#fff"/></svg>
<div class="abs" style="left:114px;top:1041px;width:4px;height:39px;border-left:1px solid #dfe4f0;border-right:1px solid #a0b0d0;background:#7088bc"></div>
<div class="abs" style="left:122px;top:1041px;width:58px;height:39px;border:1px solid #b8c4e0;border-radius:3px;background:linear-gradient(135deg,#8fa3d2 0,#7088c0 50%,#6a80b8 100%)"></div>
<svg class="abs" style="left:134px;top:1044px" width="32" height="32" viewBox="0 0 32 32"><rect x="1.5" y="1.5" width="27" height="28" rx="1.5" fill="#f4f7fc" stroke="#2a5cb8" stroke-width="1.2"/><path d="M18 18L30 21L28 30L16 27z" fill="#fff" stroke="#9ab0d8" stroke-width="0.8"/><path d="M5 24H22M5 27H20" stroke="#b8c8e6" stroke-width="1"/><text x="3" y="20" font-family="Liberation Sans" font-weight="bold" font-size="20" fill="#1f56c0">W</text></svg>
<div class="abs" style="left:1682px;top:1050px;font-size:12px;color:#e6ebf5">RU</div>
<svg class="abs" style="left:1713px;top:1058px" width="9" height="6" viewBox="0 0 9 6"><path d="M0 5.5L4.5 0.5L9 5.5z" fill="#f0f0f0"/></svg>
<svg class="abs" style="left:1734px;top:1053px" width="17" height="16" viewBox="0 0 17 16"><path d="M1 1V15" stroke="#f4f4f4" stroke-width="1.4"/><path d="M2 1.5H8L9 3H13V9H8L7 8H2z" fill="#eaeaea"/><circle cx="11.5" cy="11.5" r="4" fill="#e23030"/><path d="M9.8 9.8L13.2 13.2M13.2 9.8L9.8 13.2" stroke="#fff" stroke-width="1.3"/></svg>
<svg class="abs" style="left:1757px;top:1053px" width="18" height="17" viewBox="0 0 18 17"><circle cx="7.5" cy="7.5" r="7" fill="#10a0a0"/><circle cx="7.5" cy="7.5" r="5" fill="#fff"/><text x="7.5" y="11" font-family="Liberation Sans" font-weight="bold" font-size="10" fill="#10a0a0" text-anchor="middle">e</text><path d="M13 9L17.5 16.5H8.5z" fill="#e23030"/><path d="M13 11.5V14" stroke="#fff" stroke-width="1.2"/></svg>
<svg class="abs" style="left:1782px;top:1053px" width="17" height="16" viewBox="0 0 17 16"><rect x="5" y="4" width="11" height="8" fill="#1a2a50" stroke="#f0f0f0" stroke-width="1.3"/><path d="M10.5 12V14M7 14.5H14" stroke="#f0f0f0" stroke-width="1.3"/><path d="M2 0V16M0 3H4" stroke="#f0f0f0" stroke-width="1.2"/></svg>
<svg class="abs" style="left:1806px;top:1053px" width="17" height="16" viewBox="0 0 17 16"><path d="M1 5H4L8 1.5V14.5L4 11H1z" fill="#f0f0f0"/><path d="M10.5 5.5Q12 8 10.5 10.5M12.8 3.5Q15.5 8 12.8 12.5" stroke="#f0f0f0" stroke-width="1.2" fill="none"/></svg>
<div class="abs" style="left:1826px;top:1045px;width:80px;text-align:center;font-size:11.5px;line-height:17px;color:#fff">12:05<br>22.12.2020</div>
<div class="abs" style="left:1906px;top:1041px;width:14px;height:39px;border:1px solid #8ea2cc;background:linear-gradient(135deg,#5a78b8,#2d4a88)"></div>
<div id="panel" class="abs"></div>
<svg class="abs" style="left:1619px;top:42px" width="10" height="7" viewBox="0 0 10 7"><path d="M1 1.5L5 5.5L9 1.5" stroke="#6e6e7e" stroke-width="1.5" fill="none"/></svg>
<div class="abs" style="left:1600px;top:36px;width:320px;text-align:center;font-size:13px;font-weight:bold;color:#232333">Участники (70)</div>
<div class="abs" style="left:1619px;top:76px;width:285px;height:32px;border:1px solid #bdbdd0;border-radius:7px;background:#fff"></div>
<svg class="abs" style="left:1630px;top:86px" width="14" height="14" viewBox="0 0 14 14"><circle cx="5.8" cy="5.8" r="4.6" stroke="#6e6e7e" stroke-width="1.3" fill="none"/><path d="M9.2 9.2L12.8 12.8" stroke="#6e6e7e" stroke-width="1.4"/></svg>
<div class="abs" style="left:1647px;top:84px;font-size:13px;color:#747487">Найти участника</div>
<div class="abs" style="left:1910px;top:110px;width:8px;height:358px;border-radius:4px;background:#f4f4f7"></div>
<div class="abs" style="left:1910px;top:110px;width:8px;height:50px;border-radius:4px;background:#a9a9b3"></div>
<div class="pt" style="top:117px"><div class="a" style="background:#2f4157">Т</div><div class="n">Туголбай Матисаков (Я)</div></div>
<svg class="abs" style="left:1858px;top:122px" width="12" height="16" viewBox="0 0 12 16"><rect x="3.6" y="0.8" width="4.8" height="9" rx="2.4" stroke="#747487" stroke-width="1.2" fill="none"/><path d="M1.5 7.5a4.5 4.5 0 0 0 9 0" stroke="#747487" stroke-width="1.2" fill="none"/><path d="M6 12V14.5M3.5 14.8H8.5" stroke="#747487" stroke-width="1.2"/></svg>
<svg class="abs" style="left:1880px;top:125px" width="17" height="11" viewBox="0 0 17 11"><rect x="0.7" y="0.7" width="11" height="9.6" rx="2.2" stroke="#5e5e72" stroke-width="1.3" fill="none"/><path d="M11.7 4L15.8 1.3V9.7L11.7 7" stroke="#5e5e72" stroke-width="1.3" fill="none"/></svg>
<div class="pt" style="top:158px"><div class="a" style="background:#c2175b">r</div><div class="n">rectorat osh... (Организатор)</div></div>
<div class="abs" style="left:1834px;top:165px;width:12px;height:12px;border-radius:50%;border:1px solid #8a8a96"></div>
<div class="abs" style="left:1838px;top:169px;width:4px;height:4px;border-radius:50%;background:#f02a2a"></div>
<svg class="abs" style="left:1856px;top:163px" width="17" height="17" viewBox="0 0 17 17"><rect x="6" y="1.3" width="4.8" height="8.5" rx="2.4" stroke="#e8343c" stroke-width="1.2" fill="none"/><path d="M3.8 8a4.5 4.5 0 0 0 9 0" stroke="#e8343c" stroke-width="1.2" fill="none"/><path d="M8.4 12.5V15M6 15.3H11" stroke="#e8343c" stroke-width="1.2"/><path d="M1 16L16 1" stroke="#e8343c" stroke-width="1.2"/></svg>
<svg class="abs" style="left:1880px;top:166px" width="17" height="11" viewBox="0 0 17 11"><rect x="0.7" y="0.7" width="11" height="9.6" rx="2.2" stroke="#5e5e72" stroke-width="1.3" fill="none"/><path d="M11.7 4L15.8 1.3V9.7L11.7 7" stroke="#5e5e72" stroke-width="1.3" fill="none"/></svg>
<div class="pt" style="top:199px"><div class="a" style="background:#f29c11">O</div><div class="n">obozov-a@mail.ru</div></div>
<svg class="abs" style="left:1858px;top:204px" width="12" height="16" viewBox="0 0 12 16"><rect x="3.6" y="0.8" width="4.8" height="9" rx="2.4" stroke="#747487" stroke-width="1.2" fill="none"/><path d="M1.5 7.5a4.5 4.5 0 0 0 9 0" stroke="#747487" stroke-width="1.2" fill="none"/><path d="M6 12V14.5M3.5 14.8H8.5" stroke="#747487" stroke-width="1.2"/></svg>
<svg class="abs" style="left:1880px;top:207px" width="17" height="11" viewBox="0 0 17 11"><rect x="0.7" y="0.7" width="11" height="9.6" rx="2.2" stroke="#5e5e72" stroke-width="1.3" fill="none"/><path d="M11.7 4L15.8 1.3V9.7L11.7 7" stroke="#5e5e72" stroke-width="1.3" fill="none"/></svg>
<div class="pt" style="top:240px"><div class="a" style="background:#1aa18a">Д</div><div class="n">Динара Кушбакова</div></div>
<svg class="abs" style="left:1858px;top:245px" width="12" height="16" viewBox="0 0 12 16"><rect x="3.6" y="0.8" width="4.8" height="9" rx="2.4" stroke="#747487" stroke-width="1.2" fill="none"/><path d="M1.5 7.5a4.5 4.5 0 0 0 9 0" stroke="#747487" stroke-width="1.2" fill="none"/><path d="M6 12V14.5M3.5 14.8H8.5" stroke="#747487" stroke-width="1.2"/></svg>
<svg class="abs" style="left:1880px;top:248px" width="17" height="11" viewBox="0 0 17 11"><rect x="0.7" y="0.7" width="11" height="9.6" rx="2.2" stroke="#5e5e72" stroke-width="1.3" fill="none"/><path d="M11.7 4L15.8 1.3V9.7L11.7 7" stroke="#5e5e72" stroke-width="1.3" fill="none"/></svg>
<div class="pt" style="top:281px"><div class="a" style="background:#2e6b1f">З</div><div class="n">Зарипбек Айдарбеков</div></div>
<svg class="abs" style="left:1858px;top:286px" width="12" height="16" viewBox="0 0 12 16"><rect x="3.6" y="0.8" width="4.8" height="9" rx="2.4" stroke="#747487" stroke-width="1.2" fill="none"/><path d="M1.5 7.5a4.5 4.5 0 0 0 9 0" stroke="#747487" stroke-width="1.2" fill="none"/><path d="M6 12V14.5M3.5 14.8H8.5" stroke="#747487" stroke-width="1.2"/></svg>
<svg class="abs" style="left:1880px;top:289px" width="17" height="11" viewBox="0 0 17 11"><rect x="0.7" y="0.7" width="11" height="9.6" rx="2.2" stroke="#5e5e72" stroke-width="1.3" fill="none"/><path d="M11.7 4L15.8 1.3V9.7L11.7 7" stroke="#5e5e72" stroke-width="1.3" fill="none"/></svg>
<div class="pt" style="top:322px"><div class="a" style="background:#2b7bc0">К</div><div class="n">Кенжаев Идирисбек Гуламович</div></div>
<svg class="abs" style="left:1858px;top:327px" width="12" height="16" viewBox="0 0 12 16"><rect x="3.6" y="0.8" width="4.8" height="9" rx="2.4" stroke="#747487" stroke-width="1.2" fill="none"/><path d="M1.5 7.5a4.5 4.5 0 0 0 9 0" stroke="#747487" stroke-width="1.2" fill="none"/><path d="M6 12V14.5M3.5 14.8H8.5" stroke="#747487" stroke-width="1.2"/></svg>
<svg class="abs" style="left:1880px;top:330px" width="17" height="11" viewBox="0 0 17 11"><rect x="0.7" y="0.7" width="11" height="9.6" rx="2.2" stroke="#5e5e72" stroke-width="1.3" fill="none"/><path d="M11.7 4L15.8 1.3V9.7L11.7 7" stroke="#5e5e72" stroke-width="1.3" fill="none"/></svg>
<div class="pt" style="top:363px"><div class="a" style="background:#1a9e84">B</div><div class="n">bdosonov1960@gmail.com</div></div>
<svg class="abs" style="left:1858px;top:368px" width="12" height="16" viewBox="0 0 12 16"><rect x="3.6" y="0.8" width="4.8" height="9" rx="2.4" stroke="#747487" stroke-width="1.2" fill="none"/><path d="M1.5 7.5a4.5 4.5 0 0 0 9 0" stroke="#747487" stroke-width="1.2" fill="none"/><path d="M6 12V14.5M3.5 14.8H8.5" stroke="#747487" stroke-width="1.2"/></svg>
<svg class="abs" style="left:1880px;top:371px" width="17" height="11" viewBox="0 0 17 11"><rect x="0.7" y="0.7" width="11" height="9.6" rx="2.2" stroke="#5e5e72" stroke-width="1.3" fill="none"/><path d="M11.7 4L15.8 1.3V9.7L11.7 7" stroke="#5e5e72" stroke-width="1.3" fill="none"/></svg>
<div class="pt" style="top:404px"><div class="a" style="background:#8e44ad">Ж</div><div class="n">Жанышова Асель</div></div>
<svg class="abs" style="left:1858px;top:409px" width="12" height="16" viewBox="0 0 12 16"><rect x="3.6" y="0.8" width="4.8" height="9" rx="2.4" stroke="#747487" stroke-width="1.2" fill="none"/><path d="M1.5 7.5a4.5 4.5 0 0 0 9 0" stroke="#747487" stroke-width="1.2" fill="none"/><path d="M6 12V14.5M3.5 14.8H8.5" stroke="#747487" stroke-width="1.2"/></svg>
<svg class="abs" style="left:1880px;top:412px" width="17" height="11" viewBox="0 0 17 11"><rect x="0.7" y="0.7" width="11" height="9.6" rx="2.2" stroke="#5e5e72" stroke-width="1.3" fill="none"/><path d="M11.7 4L15.8 1.3V9.7L11.7 7" stroke="#5e5e72" stroke-width="1.3" fill="none"/></svg>
<div class="pt" style="top:445px"><div class="a" style="background:#f39c12">Р</div><div class="n">Рабшанбек Ураимов</div></div>
<svg class="abs" style="left:1882px;top:450px" width="12" height="16" viewBox="0 0 12 16"><rect x="3.6" y="0.8" width="4.8" height="9" rx="2.4" stroke="#747487" stroke-width="1.2" fill="none"/><path d="M1.5 7.5a4.5 4.5 0 0 0 9 0" stroke="#747487" stroke-width="1.2" fill="none"/><path d="M6 12V14.5M3.5 14.8H8.5" stroke="#747487" stroke-width="1.2"/></svg>
<div class="abs" style="left:1606px;top:494px;width:80px;height:23px;border-radius:6px;background:#f1f1f5;color:#232333;font-size:12px;line-height:23px;text-align:center;white-space:nowrap">Пригласить</div>
<div class="abs" style="left:1691px;top:494px;width:131px;height:23px;border-radius:6px;background:#f1f1f5;color:#232333;font-size:12px;line-height:23px;text-align:center;white-space:nowrap">Выключить мой звук</div>
<div class="abs" style="left:1827px;top:494px;width:89px;height:23px;border-radius:6px;background:#f1f1f5;color:#232333;font-size:12px;line-height:23px;text-align:center;white-space:nowrap">Поднять руку</div>
<div class="abs" style="left:1621px;top:531px;width:299px;height:1px;background:#e6e6ec"></div>
<svg class="abs" style="left:1619px;top:551px" width="10" height="7" viewBox="0 0 10 7"><path d="M1 1.5L5 5.5L9 1.5" stroke="#6e6e7e" stroke-width="1.5" fill="none"/></svg>
<div class="abs" style="left:1600px;top:545px;width:320px;text-align:center;font-size:13px;font-weight:bold;color:#232333">Чат</div>
<div class="abs chat" style="top:579px;font-size:12px;color:#747487">От <span style="color:#2d72e8">Айкөкүл</span> кому <span style="color:#2d72e8">Все:</span></div>
<div class="abs chat" style="top:595px;font-size:13.5px;line-height:19px;color:#2c2c3c">Майрамыңыздар кут болсун!<br>Ийгиликтерди каалайбыз!</div>
<div class="abs chat" style="top:647px;font-size:12px;color:#747487">От <span style="color:#2d72e8">Каныкей Абдулмажид кызы</span> кому <span style="color:#2d72e8">Все:</span></div>
<div class="abs chat" style="top:663px;font-size:13.5px;line-height:19px;color:#2c2c3c">Бугунку майрамыңыздар менен<br>куттуктайм</div>
<div class="abs" style="left:1601px;top:946px;width:319px;height:1px;background:#e4e4ee"></div>
<div class="abs" style="left:1617px;top:963px;font-size:12px;color:#2c2c3c">Кому:</div>
<div class="abs" style="left:1658px;top:959px;width:79px;height:23px;border-radius:6px;background:#f1f1f5"></div>
<div class="abs" style="left:1665px;top:964px;font-size:12px;color:#131320">Нурбакыт</div>
<svg class="abs" style="left:1721px;top:967px" width="9" height="6" viewBox="0 0 9 6"><path d="M1 1L4.5 4.5L8 1" stroke="#232333" stroke-width="1.6" fill="none"/></svg>
<div class="abs" style="left:1743px;top:963px;font-size:12px;color:#e8606e">(Частное)</div>
<div class="abs" style="left:1881px;top:958px;width:24px;height:24px;border-radius:6px;border:1px solid #dcdce6"></div>
<div class="abs" style="left:1887px;top:969px;width:12px;height:2px;background:radial-gradient(circle,#5e5e72 0.9px,transparent 1px) 0 0/4px 2px"></div>
<div class="abs" style="left:1617px;top:990px;font-size:13px;color:#8a8a9a">Введите здесь сообщение...</div>
</body></html>
